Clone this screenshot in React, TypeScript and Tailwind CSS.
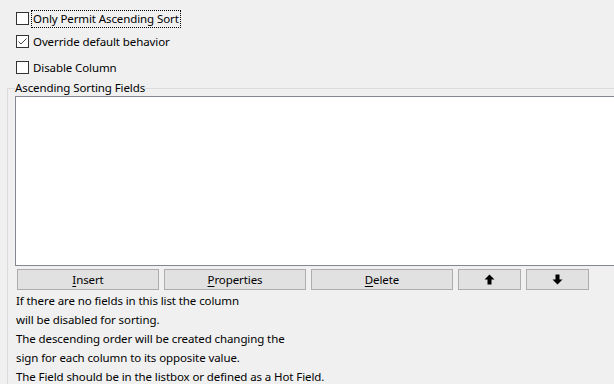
import type { ReactNode } from "react";

function CheckBox({ checked, label, focused }: { checked?: boolean; label: string; focused?: boolean }) {
  return (
    <div className="flex h-[13px] items-center">
      <span className="flex h-[13px] w-[13px] shrink-0 items-center justify-center border border-[#333333] bg-white">
        {checked ? (
          <svg width="11" height="11" viewBox="0 0 11 11">
            <polyline points="1.5,5.5 4,8 9.5,2.5" fill="none" stroke="#444444" strokeWidth="1" />
          </svg>
        ) : null}
      </span>
      <span
        className={`ml-[3px] px-[1px] leading-[16px] ${
          focused ? "outline outline-1 outline-dotted outline-black" : ""
        }`}
      >
        {label}
      </span>
    </div>
  );
}

function WinButton({ width, children }: { width: string; children: ReactNode }) {
  return (
    <button
      type="button"
      className={`flex h-[21px] ${width} shrink-0 items-center justify-center border border-[#adadad] bg-[#e1e1e1] text-black`}
    >
      {children}
    </button>
  );
}

function Arrow({ up }: { up?: boolean }) {
  return (
    <svg width="11" height="11" viewBox="0 0 11 11" className={up ? "" : "rotate-180"}>
      <polygon points="5.5,0.5 10.5,5.5 7.5,5.5 7.5,10.5 3.5,10.5 3.5,5.5 0.5,5.5" fill="#000" />
    </svg>
  );
}

export default function App() {
  return (
    <div className="h-[384px] w-[614px] overflow-hidden bg-[#f0f0f0] font-['Noto_Sans','Open_Sans',sans-serif] text-[11.5px] tracking-[-0.1px] text-black">
      <div className="flex flex-col pl-4">
        <div className="mt-[12px]">
          <CheckBox label="Only Permit Ascending Sort" focused />
        </div>
        <div className="mt-[10px]">
          <CheckBox label="Override default behavior" checked />
        </div>
        <div className="mt-[13px]">
          <CheckBox label="Disable Column" />
        </div>
      </div>

      <fieldset className="ml-[7px] mt-[6px] w-[640px] border border-[#dcdcdc] px-[7px] pb-2">
        <legend className="leading-[16px]">Ascending Sorting Fields</legend>
        <div className="h-[170px] border border-[#828790] bg-white" />

        <div className="mt-[3px] ml-[2px] flex gap-[5px]">
          <WinButton width="w-[142px]">
            <span className="underline underline-offset-2">I</span>nsert
          </WinButton>
          <WinButton width="w-[142px]">
            <span className="underline underline-offset-2">P</span>roperties
          </WinButton>
          <WinButton width="w-[142px]">
            <span className="underline underline-offset-2">D</span>elete
          </WinButton>
          <WinButton width="w-[63px]">
            <Arrow up />
          </WinButton>
          <WinButton width="w-[63px]">
            <Arrow />
          </WinButton>
        </div>

        <div className="mt-[1px] ml-[1px] leading-[19px]">
          <p>If there are no fields in this list the column</p>
          <p>will be disabled for sorting.</p>
          <p>The descending order will be created changing the</p>
          <p>sign for each column to its opposite value.</p>
          <p>The Field should be in the listbox or defined as a Hot Field.</p>
        </div>
      </fieldset>
    </div>
  );
}
